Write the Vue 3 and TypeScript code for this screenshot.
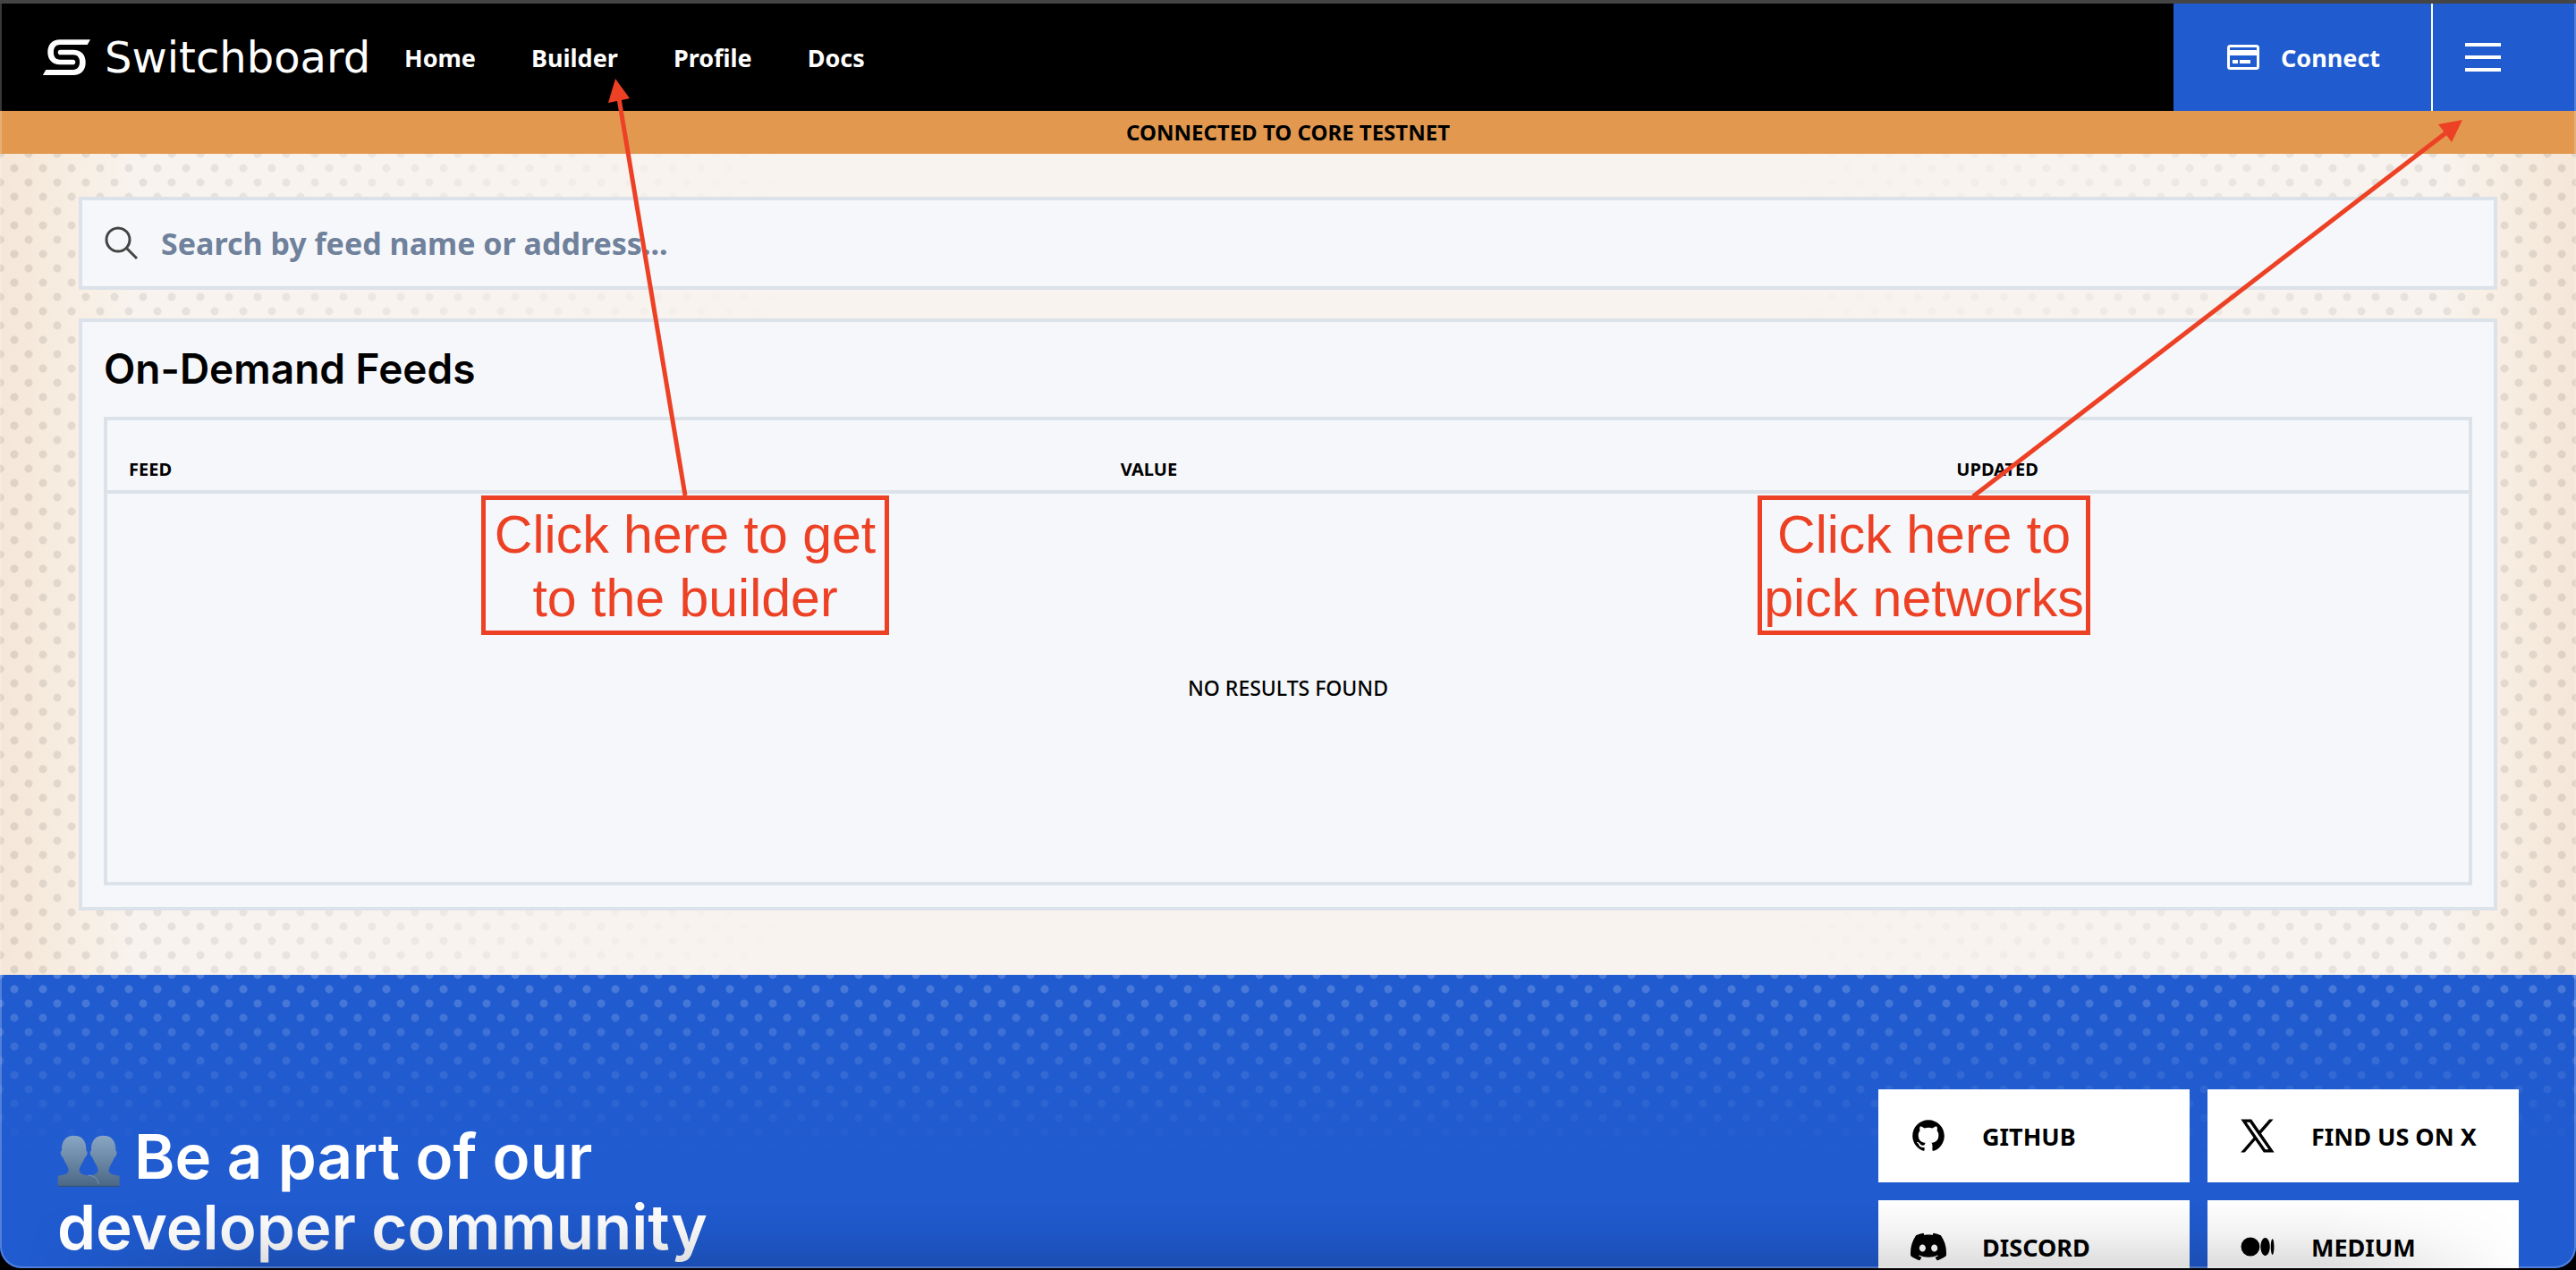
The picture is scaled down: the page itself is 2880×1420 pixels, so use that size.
<script setup lang="ts">
import { ref } from 'vue'

const query = ref('')

const navLinks: string[] = ['Home', 'Builder', 'Profile', 'Docs']
const columns: string[] = ['FEED', 'VALUE', 'UPDATED']

interface Social {
  label: string
  viewBox: string
  path: string
  outline?: number
}

const socials: Social[] = [
  {
    label: 'GITHUB',
    viewBox: '-1 -1 18 18',
    path: 'M8 0C3.58 0 0 3.58 0 8c0 3.54 2.29 6.53 5.47 7.59.4.07.55-.17.55-.38 0-.19-.01-.82-.01-1.49-2.01.37-2.53-.49-2.69-.94-.09-.23-.48-.94-.82-1.13-.28-.15-.68-.52-.01-.53.63-.01 1.08.58 1.23.82.72 1.21 1.87.87 2.33.66.07-.52.28-.87.51-1.07-1.78-.2-3.64-.89-3.64-3.95 0-.87.31-1.59.82-2.15-.08-.2-.36-1.02.08-2.12 0 0 .67-.21 2.2.82.64-.18 1.32-.27 2-.27s1.36.09 2 .27c1.53-1.04 2.2-.82 2.2-.82.44 1.1.16 1.92.08 2.12.51.56.82 1.27.82 2.15 0 3.07-1.87 3.75-3.65 3.95.29.25.54.73.54 1.48 0 1.07-.01 1.93-.01 2.2 0 .21.15.46.55.38A8.01 8.01 0 0 0 16 8c0-4.42-3.58-8-8-8z',
  },
  {
    label: 'FIND US ON X',
    viewBox: '-80 -60 1360 1347',
    path: 'M714.163 519.284L1160.89 0H1055.03L667.137 450.887L357.328 0H0L468.492 681.821L0 1226.37H105.866L515.491 750.218L842.672 1226.37H1200L714.137 519.284H714.163ZM569.165 687.828L521.697 619.934L144.011 79.6944H306.615L611.412 515.685L658.88 583.579L1055.08 1150.3H892.476L569.165 687.854V687.828Z',
    outline: 36,
  },
  {
    label: 'DISCORD',
    viewBox: '0 0 24 24',
    path: 'M20.317 4.3698a19.7913 19.7913 0 0 0-4.8851-1.5152.0741.0741 0 0 0-.0785.0371c-.211.3753-.4447.8648-.6083 1.2495-1.8447-.2762-3.68-.2762-5.4868 0-.1636-.3933-.4058-.8742-.6177-1.2495a.077.077 0 0 0-.0785-.037 19.7363 19.7363 0 0 0-4.8852 1.515.0699.0699 0 0 0-.0321.0277C.5334 9.0458-.319 13.5799.0992 18.0578a.0824.0824 0 0 0 .0312.0561c2.0528 1.5076 4.0413 2.4228 5.9929 3.0294a.0777.0777 0 0 0 .0842-.0276c.4616-.6304.8731-1.2952 1.226-1.9942a.076.076 0 0 0-.0416-.1057c-.6528-.2476-1.2743-.5495-1.8722-.8923a.077.077 0 0 1-.0076-.1277c.1258-.0943.2517-.1923.3718-.2914a.0743.0743 0 0 1 .0776-.0105c3.9278 1.7933 8.18 1.7933 12.0614 0a.0739.0739 0 0 1 .0785.0095c.1202.099.246.1981.3728.2924a.077.077 0 0 1-.0066.1276 12.2986 12.2986 0 0 1-1.873.8914.0766.0766 0 0 0-.0407.1067c.3604.698.7719 1.3628 1.225 1.9932a.076.076 0 0 0 .0842.0286c1.961-.6067 3.9495-1.5219 6.0023-3.0294a.077.077 0 0 0 .0313-.0552c.5004-5.177-.8382-9.6739-3.5485-13.6604a.061.061 0 0 0-.0312-.0286zM8.02 15.3312c-1.1825 0-2.1569-1.0857-2.1569-2.419 0-1.3332.9555-2.4189 2.157-2.4189 1.2108 0 2.1757 1.0952 2.1568 2.419 0 1.3332-.9555 2.4189-2.1569 2.4189zm7.9748 0c-1.1825 0-2.1569-1.0857-2.1569-2.419 0-1.3332.9554-2.4189 2.1569-2.4189 1.2108 0 2.1757 1.0952 2.1568 2.419 0 1.3332-.946 2.4189-2.1568 2.4189Z',
  },
  {
    label: 'MEDIUM',
    viewBox: '-1 -1 26 26',
    path: 'M13.54 12a6.8 6.8 0 0 1-6.77 6.82A6.8 6.8 0 0 1 0 12a6.8 6.8 0 0 1 6.77-6.82A6.8 6.8 0 0 1 13.54 12zm7.42 0c0 3.54-1.51 6.42-3.38 6.42-1.87 0-3.39-2.88-3.39-6.42s1.52-6.42 3.39-6.42 3.38 2.88 3.38 6.42M24 12c0 3.17-.53 5.75-1.19 5.75-.66 0-1.19-2.58-1.19-5.75s.53-5.75 1.19-5.75C23.47 6.25 24 8.83 24 12z',
  },
]
</script>

<template>
  <div class="window">
    <header class="topbar">
      <a class="brand" href="#">
        <svg class="brand-mark" viewBox="54 42 160 120" aria-hidden="true">
          <g id="half">
            <path d="M214 42H112C84 42 70 60 70 85C70 110 85 127 112 127H155A8 8 0 0 0 155 110H112C97 110 90 100 90 86C90 70 97 60 112 60H204Z" />
          </g>
          <use href="#half" transform="rotate(180 134 102)" />
        </svg>
        <span class="brand-name">Switchboard</span>
      </a>
      <nav class="nav">
        <a v-for="link in navLinks" :key="link" href="#">{{ link }}</a>
      </nav>
      <button class="connect" type="button">
        <svg class="card-icon" viewBox="0 0 36 28" aria-hidden="true">
          <rect x="1.5" y="1.5" width="33" height="25" rx="2" fill="none" stroke="#fff" stroke-width="3" />
          <path d="M2 6h32v6H2zM6 17h6v4H6zM14 17h12v4H14z" fill="#fff" />
        </svg>
        Connect
      </button>
      <button class="menu" type="button" aria-label="Menu">
        <span></span><span></span><span></span>
      </button>
    </header>

    <div class="network">CONNECTED TO CORE TESTNET</div>

    <main class="hero">
      <label class="search">
        <svg class="search-icon" viewBox="0 0 40 40" fill="none" stroke="#444" stroke-width="3" aria-hidden="true">
          <circle cx="16" cy="16" r="13" />
          <path d="M25 25L37 37" />
        </svg>
        <input v-model="query" type="text" placeholder="Search by feed name or address..." aria-label="Search feeds" />
      </label>

      <section class="panel">
        <h2>On-Demand Feeds</h2>
        <div class="frame">
          <table>
            <colgroup>
              <col class="col-feed" />
              <col class="col-value" />
              <col />
            </colgroup>
            <thead>
              <tr>
                <th v-for="column in columns" :key="column" scope="col">{{ column }}</th>
              </tr>
            </thead>
            <tbody>
              <tr>
                <td colspan="3">NO RESULTS FOUND</td>
              </tr>
            </tbody>
          </table>
        </div>
      </section>
    </main>

    <footer class="community">
      <h1>
        <svg class="busts" viewBox="78 88 206 174" aria-hidden="true">
          <defs>
            <linearGradient id="skin" x1="0" y1="0" x2="0" y2="1">
              <stop offset="0" stop-color="#89a7c4" />
              <stop offset="1" stop-color="#4b6785" />
            </linearGradient>
            <path
              id="bust"
              d="M-54 260V228Q-53 223-44 223C-25 221-18 215-18 205C-18 195-30 182-36 165Q-45 158-45 148Q-45 141-41 142C-43 106-25 90 0 90S43 106 41 142Q45 141 45 148Q45 158 36 165C30 182 18 195 18 205C18 215 25 221 44 223Q53 223 54 228V260Z"
            />
          </defs>
          <use href="#bust" x="231" fill="url(#skin)" />
          <use href="#bust" x="132" fill="url(#skin)" />
          <path d="M180 223C202 226 213 235 214 252" fill="none" stroke="#86b0d4" stroke-width="2" />
          <path d="M78 260H284" stroke="#34506e" stroke-width="3" />
        </svg>Be a part of our<br />developer community
      </h1>
      <div class="socials">
        <a v-for="social in socials" :key="social.label" class="social" href="#">
          <svg :viewBox="social.viewBox" aria-hidden="true">
            <path :d="social.path" stroke="#000" :stroke-width="social.outline ?? 0" />
          </svg>
          {{ social.label }}
        </a>
      </div>
    </footer>

    <div class="shade"></div>

    <svg class="arrow arrow-builder" viewBox="0 0 120 476" aria-hidden="true">
      <path d="M106 474L32 30" stroke="#ed4125" stroke-width="5" />
      <path d="M28 8L44 30L20 35Z" fill="#ed4125" />
    </svg>
    <p class="note note-builder">Click here to get<br />to the builder</p>

    <svg class="arrow arrow-network" viewBox="0 0 560 426" aria-hidden="true">
      <path d="M6 425L534 19" stroke="#ed4125" stroke-width="5" />
      <path d="M553 4L526 9L541 29Z" fill="#ed4125" />
    </svg>
    <p class="note note-network">Click here to<br />pick networks</p>
  </div>
</template>

<style>
body {
  margin: 0;
  background: #000;
}
</style>

<style scoped>
* {
  box-sizing: border-box;
}

.window {
  position: relative;
  height: calc(100vh - 2px);
  overflow: hidden;
  border-top: 4px solid #454545;
  border-radius: 0 0 24px 24px;
  background: #205bd0;
  color: #000;
  font-family: "Noto Sans", "Open Sans", sans-serif;
}

.window::after {
  content: "";
  position: absolute;
  inset: 0;
  border: 2px solid rgba(255, 255, 255, 0.22);
  border-top: 0;
  border-radius: 0 0 24px 24px;
  pointer-events: none;
}

a {
  color: inherit;
  text-decoration: none;
}

button {
  border: 0;
  padding: 0;
  font: inherit;
  color: inherit;
}

.topbar {
  display: flex;
  height: 120px;
  padding-left: 48px;
  background: #000;
  color: #fff;
  font-size: 27px;
  font-weight: 700;
}

.brand {
  display: flex;
  align-items: center;
  gap: 16px;
  width: 362px;
}

.brand-mark {
  flex: none;
  width: 53px;
  height: 40px;
  fill: #fff;
}

.brand-name {
  font: 400 48px/48px "DejaVu Sans", sans-serif;
}

.nav {
  display: flex;
  align-items: center;
  gap: 62px;
  margin-left: 42px;
  margin-right: auto;
}

.connect {
  display: flex;
  align-items: center;
  gap: 24px;
  width: 288px;
  padding-left: 60px;
  background: #205bd0;
}

.card-icon {
  width: 36px;
  height: 28px;
}

.menu {
  display: flex;
  flex-direction: column;
  justify-content: center;
  gap: 10px;
  width: 162px;
  padding-left: 36px;
  border-left: 2px solid #fff;
  background: #205bd0;
}

.menu span {
  width: 40px;
  height: 4px;
  background: #fff;
}

.network {
  background: #e2994f;
  font-size: 24px;
  font-weight: 700;
  line-height: 48px;
  text-align: center;
}

.hero {
  position: relative;
  padding: 48px 88px 72px;
  background: linear-gradient(
    to right,
    #f5e6d8 0,
    #f8eee3 90px,
    #f8f3ee 150px,
    #f8f3ee calc(100% - 150px),
    #f8eee3 calc(100% - 90px),
    #f5e6d8 100%
  );
}

.hero::before,
.community::before {
  content: "";
  position: absolute;
  inset: 0;
  background-image:
    radial-gradient(circle, var(--dot) 4px, transparent 5px),
    radial-gradient(circle, var(--dot) 4px, transparent 5px);
  background-size: 32px 32px;
  background-position: 0 0, 16px 16px;
}

.hero::before {
  --dot: rgba(0, 0, 0, 0.09);
  mask-image: linear-gradient(to right, #000, transparent 31%, transparent 69%, #000);
}

.search,
.panel {
  position: relative;
  border: 4px solid #dce2e9;
  background: #f6f7fa;
}

.search {
  display: flex;
  align-items: center;
  gap: 24px;
  height: 104px;
  margin-bottom: 32px;
  padding: 0 24px;
}

.search-icon {
  width: 40px;
  height: 40px;
}

.search input {
  flex: 1;
  border: 0;
  padding: 0;
  outline: 0;
  background: transparent;
  font: 700 34px/48px "Noto Sans", sans-serif;
}

.search input::placeholder {
  color: #6f819b;
  opacity: 1;
}

.panel {
  padding: 24px;
}

h1,
h2,
p {
  margin: 0;
}

h2 {
  margin-bottom: 26px;
  font: 600 46px/56px Inter, sans-serif;
}

.frame {
  border: 4px solid #dce2e9;
}

table {
  width: 100%;
  table-layout: fixed;
  border-collapse: collapse;
}

.col-feed {
  width: 42%;
}

.col-value {
  width: 35.4%;
}

th {
  padding: 40px 24px 8px;
  font-size: 20px;
  font-weight: 700;
  line-height: 30px;
  text-align: left;
}

td {
  height: 436px;
  padding: 0;
  border-top: 4px solid #dce2e9;
  font-size: 23px;
  font-weight: 500;
  text-align: center;
}

.community {
  position: relative;
  display: flex;
  justify-content: space-between;
  align-items: flex-start;
  padding: 128px 64px;
  background: #205bd0;
}

.community::before {
  --dot: rgba(255, 255, 255, 0.2);
  bottom: auto;
  height: 200px;
  mask-image: linear-gradient(#000, transparent);
}

h1 {
  position: relative;
  padding-top: 36px;
  color: #fff;
  font: 600 69px/79px Inter, sans-serif;
}

.busts {
  width: 70px;
  height: 58px;
  margin-right: 16px;
  vertical-align: -9px;
}

.socials {
  position: relative;
  display: grid;
  grid-template-columns: 348px 348px;
  gap: 20px;
}

.social {
  display: flex;
  align-items: center;
  gap: 40px;
  height: 104px;
  padding-left: 36px;
  background: #fff;
  font-size: 27px;
  font-weight: 700;
}

.social svg {
  width: 40px;
  height: 40px;
}

.shade {
  position: absolute;
  right: 0;
  bottom: 0;
  left: 0;
  height: 76px;
  background: linear-gradient(transparent, rgba(0, 0, 0, 0.05) 50%, rgba(0, 0, 0, 0.14));
  mask-image: linear-gradient(to right, transparent 30px, #000 280px, #000 calc(100% - 280px), transparent calc(100% - 60px));
}

.arrow {
  position: absolute;
  fill: none;
}

.arrow-builder {
  top: 76px;
  left: 660px;
  width: 120px;
  height: 476px;
}

.arrow-network {
  top: 126px;
  right: 120px;
  width: 560px;
  height: 426px;
}

.note {
  position: absolute;
  top: 550px;
  height: 156px;
  padding-top: 4px;
  border: 5px solid #ed4125;
  color: #ed4125;
  font: 400 59px/71px "Liberation Sans", Arial, sans-serif;
  text-align: center;
  white-space: nowrap;
}

.note-builder {
  left: 538px;
  width: 456px;
}

.note-network {
  right: 543px;
  width: 372px;
}
</style>
